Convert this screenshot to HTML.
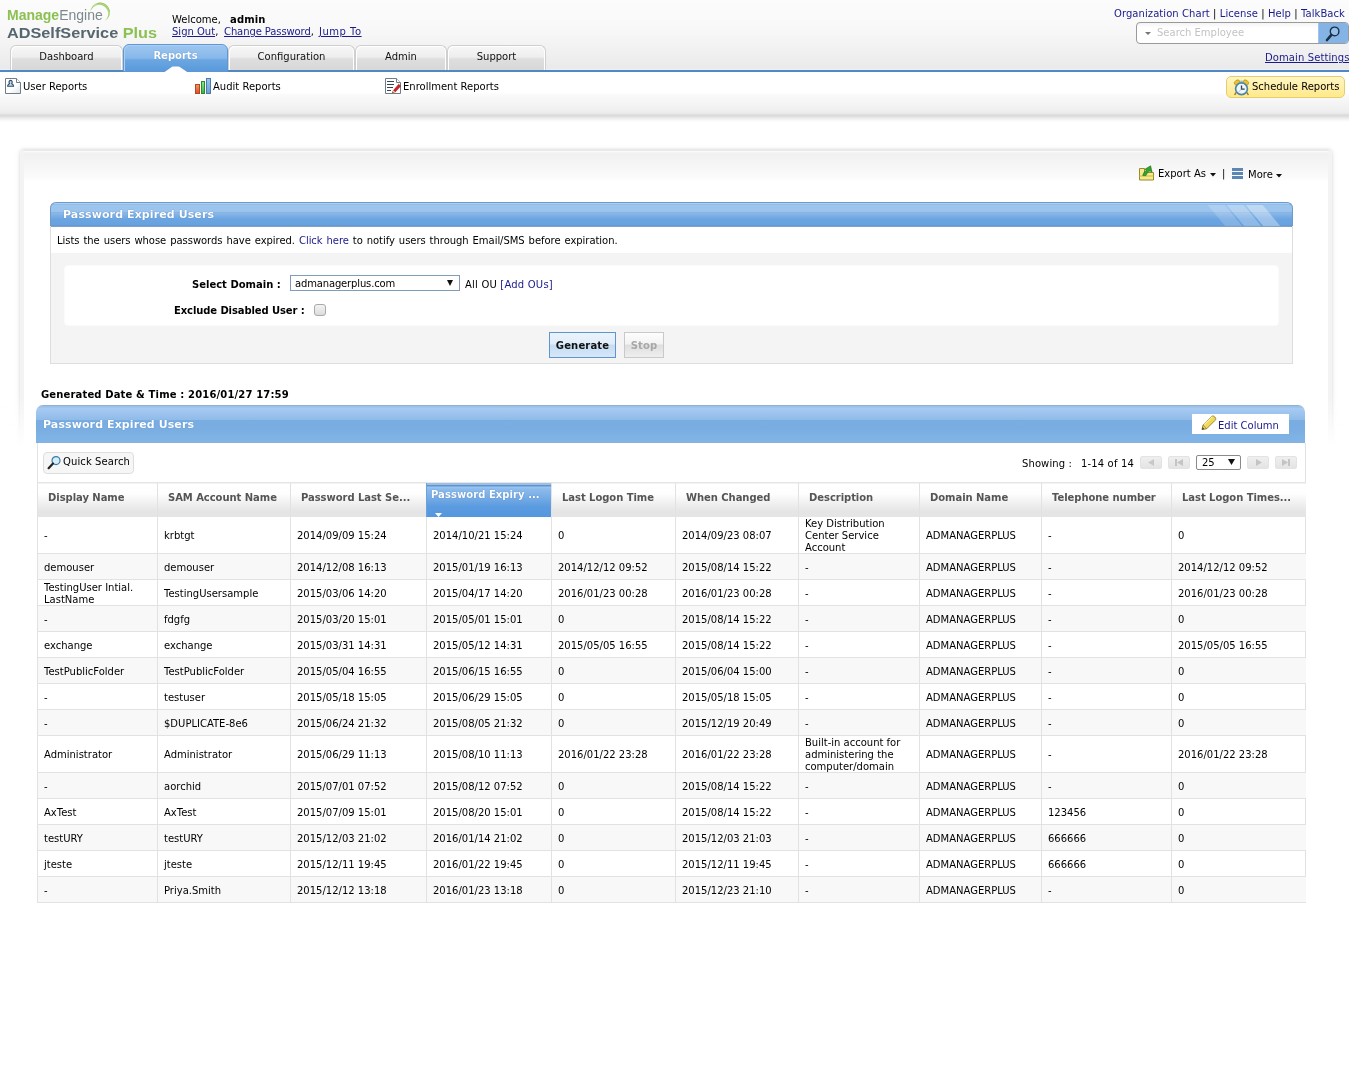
<!DOCTYPE html>
<html lang="en">
<head>
<meta charset="utf-8">
<title>ADSelfService Plus - Password Expired Users</title>
<style>
*{box-sizing:border-box}
html,body{margin:0;padding:0}
body{width:1349px;height:1076px;position:relative;overflow:hidden;background:#fff;color:#000;
 font-family:"DejaVu Sans","Liberation Sans",sans-serif;font-size:10px;line-height:12px}
a{color:#1a1a8c;text-decoration:none}
.abs{position:absolute;white-space:nowrap}
b,.b{font-weight:bold;letter-spacing:.15px}

/* ---------- header ---------- */
#hdr{position:absolute;left:0;top:0;width:1349px;height:70px;
 background:linear-gradient(#fcfcfc 0,#f8f8f8 30px,#efefef 55px,#eaeaea 69px,#e9f0f8 69px,#e9f0f8 70px)}
#blueline{position:absolute;left:0;top:70px;width:1349px;height:2px;background:#5188c3}
.logo1{left:7px;top:7px;font-family:"Liberation Sans",sans-serif;font-size:14px;line-height:16px;letter-spacing:0}
.logo1 .m{color:#8cc152;font-weight:bold}
.logo1 .e{color:#7d8a8f}
.logo2{left:7px;top:24px;font-family:"Liberation Sans",sans-serif;font-size:15px;line-height:17px;font-weight:bold;color:#56666f;letter-spacing:0;transform:scaleX(1.084);transform-origin:0 0}
.logo2 .p{color:#8cc152}
.ulink a{text-decoration:underline}

/* tabs */
.tab{position:absolute;top:45px;height:25px;border:1px solid #cfcfcf;border-bottom:0;border-radius:6px 6px 0 0;
 background:linear-gradient(#f7f7f7 0,#eeeeee 11px,#dedede 13px,#d7d7d7 25px);text-align:center;line-height:21px;color:#111;
 box-shadow:inset 1px 1px 0 #fff, inset -1px 0 0 #fff}
.tab.sel{top:44px;height:28px;z-index:2;border-color:#5f97d4;background:linear-gradient(#9dc6ef 0,#87b8ea 13px,#6ba6e1 15px,#5d9cdc 24px,#5a97d8 28px);
 color:#fff;font-weight:bold;line-height:21px;padding-right:5px;box-shadow:inset 1px 1px 0 #a9d0f4;text-shadow:0 0 1px #3c74b4}

/* search */
#sbox{position:absolute;left:1136px;top:22px;width:213px;height:22px;border:1px solid #9a9a9a;border-radius:4px;background:linear-gradient(#f4f4f4,#fff 5px);overflow:hidden}
#sbtn{position:absolute;right:0;top:0;width:30px;height:20px;background:#84b4e6;border-left:1px solid #9cc4ee}

/* ---------- sub nav ---------- */
#subnav{position:absolute;left:0;top:72px;width:1349px;height:50px;
 background:linear-gradient(#fff 0,#fff 21px,#fbfbfb 22px,#f3f3f3 33px,#eeeeee 40px,#e6e6e6 42px,#dbdbdb 43px,#dbdbdb 44px,#e3e3e3 45px,#eaeaea 46px,#f6f6f6 48px,#fff 50px)}
#sched{position:absolute;left:1226px;top:76px;width:119px;height:22px;border:1px solid #e3cf6e;border-radius:5px;
 background:linear-gradient(#fff6c4,#ffe98a);}

/* ---------- outer panel ---------- */
#panel{position:absolute;left:20px;top:150px;width:1312px;height:321px;border-radius:4px;
 border-left:4px solid #f3f3f3;border-right:4px solid #f3f3f3;border-top:1px solid #e9e9e9;box-shadow:0 0 5px rgba(0,0,0,.14),0 -1px 3px rgba(0,0,0,.05);
 background:linear-gradient(#fafafa 0,#fafafa 1px,#f5f5f5 1px,#f1f1f1 2px,#f1f1f1 4px,#f5f5f5 13px,#f8f8f8 20px,#fafafa 26px,#fff 30px)}
#panelmask{position:absolute;left:0;top:395px;width:1349px;height:90px;background:linear-gradient(rgba(255,255,255,0) 0,#fff 50px,#fff 90px)}

/* ---------- report box ---------- */
#rbox{position:absolute;left:50px;top:202px;width:1243px;height:162px;border:1px solid #dedede;border-top:0;background:#f4f4f4;border-radius:6px 6px 0 0}
#rhead{position:absolute;left:-1px;top:0;width:1243px;height:24px;border:1px solid #6f9bcb;border-bottom:0;border-radius:6px 6px 0 0;overflow:hidden;
 background:linear-gradient(#a9d1f8 0,#a9d1f8 1px,#93bde9 1px,#93bde9 2px,#9dc6ef 2px,#9bc3ec 9px,#88b4e3 9px,#88b4e3 10px,#8bb8e8 10px,#6ba5e1 16px,#67a1df 22px,#6491c4 23px)}
#rhead .t{position:absolute;left:12px;top:5px;font-size:11px;line-height:13px;font-weight:bold;color:#fff;letter-spacing:.1px;text-shadow:0 0 1px #2f6fb5}
#rdesc{position:absolute;left:0;top:24px;width:1241px;height:27px;background:#fff;border-top:1px solid #7fa3cc}
#rform{position:absolute;left:13px;top:63px;width:1215px;height:61px;background:#fff;border:1px solid #fbfbfb;border-radius:4px}
.sel{position:absolute;background:#fff;border:1px solid #7f9db9;height:16px;line-height:13px;padding-left:5px}
.btn{position:absolute;height:26px;border:1px solid #5f94cd;text-align:center;font-weight:bold;line-height:25px;letter-spacing:.15px}

/* ---------- table ---------- */
#thead{position:absolute;left:36px;top:405px;width:1269px;height:38px;border-radius:7px 7px 0 0;
 background:linear-gradient(#90b1d2 0,#90b1d2 1px,#a2c4e7 1px,#97bde5 2px,#a8cbf3 3px,#8fbbe8 15px,#79ade2 15px,#7aaee2 25px,#82b4e6 37px,#86afd8 38px)}
#thead .t{position:absolute;left:7px;top:13px;font-size:11px;line-height:13px;font-weight:bold;color:#fff;letter-spacing:.1px;text-shadow:0 0 1px #3f7fc4}
#editcol{position:absolute;left:1156px;top:9px;width:97px;height:20px;background:#fff}
#tbody{position:absolute;left:37px;top:443px;width:1269px;height:460px;border-left:1px solid #e2e2e2;border-right:1px solid #e2e2e2}
#qs{position:absolute;left:43px;top:452px;width:91px;height:22px;border:1px solid #dedede;border-radius:4px;background:#f6f6f6}
.pg{position:absolute;top:456px;width:22px;height:13px;border:1px solid #e3e3e3;border-radius:2px;background:linear-gradient(#efefef,#e4e4e4)}
table#grid{position:absolute;left:37px;top:482px;width:1268px;border-collapse:collapse;table-layout:fixed}
#grid th{height:34px;padding:0 0 3px 10px;text-align:left;vertical-align:middle;font-weight:bold;color:#555;letter-spacing:-.05px;white-space:nowrap;
 border-left:1px solid #e2e2e2;border-top:1px solid #e6e6e6;background:linear-gradient(#fff 0,#fefefe 10px,#f4f4f4 17px,#eaeaea 24px,#e5e5e5 28px,#e5e5e5 34px);overflow:hidden}
#grid th.sort{background:linear-gradient(#e6e6e6 0,#e6e6e6 1px,#5b95d6 1px,#5b95d6 3px,#a3caf1 3px,#8dbcec 5px,#74aae4 15px,#5a9be0 23px,#5597de 34px);border-left-color:#6aa2e0;color:#fff;padding:0 0 9px 4px;position:relative;letter-spacing:.06px;text-shadow:0 0 1px #2f6fb5}
#grid td{height:26px;padding:0 0 0 6px;vertical-align:middle;border-left:1px solid #e2e2e2;border-bottom:1px solid #e2e2e2;line-height:12px}
#grid td i{display:block;font-style:normal;position:relative;top:1px}
#grid tr.a td{background:#f8f8f8}
#grid tr.h3 td{height:37px}
</style>
</head>
<body>
<div id="root" style="position:absolute;left:0;top:0;width:1349px;height:1076px;will-change:transform">

<!-- ================= HEADER ================= -->
<div id="hdr"></div>
<div class="abs logo1"><span class="m">Manage</span><span class="e">Engine</span></div>
<svg class="abs" style="left:88px;top:1px" width="26" height="24" viewBox="0 0 26 24">
 <path d="M2.3 11.5 A9.8 9.8 0 1 1 16.2 20.3 A9 9 0 1 0 2.3 11.5z" fill="#a4d170"/>
 <path d="M5.5 5.2 A8.9 8.9 0 0 1 20.6 13.5" fill="none" stroke="#d3edb0" stroke-width=".6"/>
 <path d="M9 2.6 A9.4 9.4 0 0 1 21.4 11" fill="none" stroke="#7fb347" stroke-width=".5"/>
</svg>
<div class="abs logo2">ADSelfService <span class="p">Plus</span></div>

<div class="abs" style="left:172px;top:14px">Welcome,</div>
<div class="abs b" style="left:230px;top:14px">admin</div>
<div class="abs ulink" style="left:172px;top:26px"><a>Sign Out</a>,</div>
<div class="abs ulink" style="left:224px;top:26px;letter-spacing:-.1px"><a>Change Password</a>,</div>
<div class="abs ulink" style="left:319px;top:26px;letter-spacing:.5px"><a>Jump To</a></div>

<div class="abs" style="left:1114px;top:8px;letter-spacing:.07px"><a>Organization Chart</a> | <a>License</a> | <a>Help</a> | <a>TalkBack</a></div>
<div id="sbox">
  <svg class="abs" style="left:8px;top:9px" width="6" height="3" viewBox="0 0 6 3"><path d="M0 0h6L3 3z" fill="#777"/></svg>
  <div class="abs" style="left:20px;top:4px;color:#c3c3c3">Search Employee</div>
  <div id="sbtn">
   <svg class="abs" style="left:6px;top:1px" width="18" height="18" viewBox="0 0 18 18">
     <circle cx="9.6" cy="7.4" r="4.3" fill="#95c0ec" stroke="#1d2f44" stroke-width="1.4"/>
     <path d="M6.2 11.2 L2 16" stroke="#1d2f44" stroke-width="2.6" stroke-linecap="round"/>
   </svg>
  </div>
</div>
<div class="abs ulink" style="left:1265px;top:52px;letter-spacing:.1px"><a>Domain Settings</a></div>

<!-- tabs -->
<div class="tab" style="left:10px;width:113px">Dashboard</div>
<div class="tab sel" style="left:123px;width:105px">Reports</div>
<div class="tab" style="left:228px;width:127px">Configuration</div>
<div class="tab" style="left:355px;width:92px">Admin</div>
<div class="tab" style="left:447px;width:99px">Support</div>
<div id="blueline"></div>
<svg class="abs" style="left:164px;top:66px;z-index:3" width="24" height="6" viewBox="0 0 24 6"><path d="M.6 6 L8.4 .6 Q9 .4 9.6 .4 L14 .4 Q14.8 .4 15.4 .8 L23.2 6z" fill="#fff"/></svg>

<!-- ================= SUB NAV ================= -->
<div id="subnav"></div>
<div class="abs" style="left:23px;top:81px">User Reports</div>
<div class="abs" style="left:213px;top:81px">Audit Reports</div>
<div class="abs" style="left:403px;top:81px">Enrollment Reports</div>
<div id="sched">
  <svg class="abs" style="left:6px;top:2px" width="17" height="17" viewBox="0 0 17 17">
    <ellipse cx="4.2" cy="3.6" rx="3" ry="2.4" transform="rotate(-35 4.2 3.6)" fill="#edc22e" stroke="#b8901a" stroke-width=".7"/>
    <ellipse cx="12.8" cy="3.6" rx="3" ry="2.4" transform="rotate(35 12.8 3.6)" fill="#edc22e" stroke="#b8901a" stroke-width=".7"/>
    <path d="M3.2 13.4 L1.6 16 M13.8 13.4 L15.4 16" stroke="#8a7a2a" stroke-width="1.4"/>
    <rect x="7.3" y="1.6" width="2.4" height="2" fill="#8fc2dc"/>
    <circle cx="8.5" cy="9.8" r="5.9" fill="#eef7fd" stroke="#4f86a8" stroke-width="1.7"/>
    <path d="M8.5 6.4v3.8h3.2" fill="none" stroke="#3a3f48" stroke-width="1.3"/>
    <path d="M8.5 10.2 L5.6 13" stroke="#9aa4ad" stroke-width=".6"/>
  </svg>
  <div class="abs" style="left:25px;top:4px">Schedule Reports</div></div>

<!-- icons -->
<svg class="abs" style="left:5px;top:78px" width="16" height="16" viewBox="0 0 16 16">
  <defs><linearGradient id="pg1" x1="0" y1="0" x2="1" y2="1"><stop offset=".55" stop-color="#fff"/><stop offset="1" stop-color="#dfe3e6"/></linearGradient></defs>
  <path d="M.5 .5h11l4 4v11h-15z" fill="url(#pg1)" stroke="#707c89" stroke-width="1"/>
  <path d="M11.5 .5v4h4" fill="#fff" stroke="#707c89" stroke-width="1"/>
  <path d="M2.6 8.2 C2.6 6.6 4 6.2 4.6 5.6 C3.6 4.6 3.8 2.4 5.6 2.4 C7.4 2.4 7.6 4.6 6.6 5.6 C7.2 6.2 8.6 6.6 8.6 8.2z" fill="#bfdcf0" stroke="#2f4b68" stroke-width="1.1" stroke-linejoin="round"/>
</svg>
<svg class="abs" style="left:195px;top:78px" width="16" height="16" viewBox="0 0 16 16">
  <defs>
   <linearGradient id="br" x1="0" y1="0" x2="0" y2="1"><stop offset="0" stop-color="#f39a6a"/><stop offset="1" stop-color="#e4492c"/></linearGradient>
   <linearGradient id="bg" x1="0" y1="0" x2="0" y2="1"><stop offset="0" stop-color="#86ee90"/><stop offset="1" stop-color="#3fae3f"/></linearGradient>
   <linearGradient id="bb" x1="0" y1="0" x2="0" y2="1"><stop offset="0" stop-color="#9cc6f0"/><stop offset="1" stop-color="#6d9ed4"/></linearGradient>
  </defs>
  <rect x=".5" y="6.5" width="4" height="9" fill="url(#br)" stroke="#b2481f" stroke-width="1"/>
  <rect x="6.5" y="3.5" width="3" height="12" fill="url(#bg)" stroke="#2c8a2c" stroke-width="1"/>
  <rect x="11.5" y=".5" width="4" height="15" fill="url(#bb)" stroke="#4c7bb2" stroke-width="1"/>
</svg>
<svg class="abs" style="left:385px;top:78px" width="17" height="16" viewBox="0 0 17 16">
  <path d="M.5 .5h11l4 4v11h-15z" fill="#fff" stroke="#707c89" stroke-width="1"/>
  <path d="M11.5 .5v4h4" fill="#fff" stroke="#707c89" stroke-width="1"/>
  <path d="M2 3.5h7M2 6.5h7M2 9.5h6M2 12.5h4" stroke="#36464f" stroke-width="1.1"/>
  <path d="M7.2 14.8 L8.2 12.2 L13.4 6.2 L15.8 8.2 L10.4 14.2z" fill="#c4262c"/>
  <path d="M13.4 6.2 L15.8 8.2" stroke="#8e1418" stroke-width=".8"/>
  <path d="M7.2 14.8 L8.2 12.2 L10.4 14.2z" fill="#f3d9a0"/>
  <path d="M7.2 14.8 L7.7 13.5 L8.8 14.4z" fill="#111"/>
</svg>

<!-- ================= PANEL ================= -->
<div id="panel"></div><div id="panelmask"></div>

<svg class="abs" style="left:1138px;top:165px" width="17" height="16" viewBox="0 0 17 16">
 <path d="M1.5 3.5h5v4h9v7.5h-14z" fill="#f7ea8c" stroke="#9a8a2a" stroke-width="1"/>
 <path d="M1.5 11h14" stroke="#cdb948" stroke-width="1"/>
 <path d="M4.8 10.6 C5.2 7.8 6.8 6.2 8.4 5.6 L7 4.2 L12.6 .8 L14 7 L11.8 5.9 C10 6.9 8.6 8.6 8 10.6z" fill="#2fa52f" stroke="#176b17" stroke-width=".6"/>
</svg>
<div class="abs" style="left:1158px;top:168px">Export As</div>
<svg class="abs" style="left:1210px;top:173px" width="6" height="4" viewBox="0 0 6 4"><path d="M0 0h6L3 3.6z" fill="#111"/></svg>
<div class="abs" style="left:1222px;top:168px">|</div>
<svg class="abs" style="left:1232px;top:168px" width="11" height="11" viewBox="0 0 11 11"><path d="M0 0h11v3h-11zM0 4h11v3h-11zM0 8h11v3h-11z" fill="#5d87b3"/></svg>
<div class="abs" style="left:1248px;top:169px">More</div>
<svg class="abs" style="left:1276px;top:174px" width="6" height="4" viewBox="0 0 6 4"><path d="M0 0h6L3 3.6z" fill="#111"/></svg>

<div id="rbox">
  <div id="rhead">
    <svg class="abs" style="right:0;top:0" width="100" height="24" viewBox="0 0 100 24">
      <path d="M15.7 2h17l18.3 22h-17z" fill="#fff" opacity=".18"/>
      <path d="M34.7 2h17l18.3 22h-17z" fill="#fff" opacity=".26"/>
      <path d="M53.7 2h17l18.3 22h-17z" fill="#fff" opacity=".34"/>
    </svg>
    <div class="t">Password Expired Users</div>
  </div>
  <div id="rdesc"><div class="abs" style="left:6px;top:8px;letter-spacing:-.04px;word-spacing:.8px">Lists the users whose passwords have expired. <a>Click here</a> to notify users through Email/SMS before expiration.</div></div>
  <div id="rform">
    <div class="abs b" style="left:127px;top:13px;letter-spacing:0">Select Domain :</div>
    <div class="sel" style="left:225px;top:9px;width:170px;padding-left:4px;letter-spacing:-.15px;line-height:15px">admanagerplus.com
      <svg class="abs" style="right:6px;top:4px" width="6" height="6" viewBox="0 0 6 6"><path d="M0 0h6L3 6z" fill="#111"/></svg>
    </div>
    <div class="abs" style="left:400px;top:13px;letter-spacing:.2px">All OU <a>[Add OUs]</a></div>
    <div class="abs b" style="left:109px;top:39px;letter-spacing:-.1px">Exclude Disabled User :</div>
    <div class="abs" style="left:249px;top:38px;width:12px;height:12px;border:1px solid #a9a9a9;border-radius:3px;background:linear-gradient(#f3f3f3,#dcdcdc)"></div>
  </div>
  <div class="btn" style="left:498px;top:130px;width:67px;background:linear-gradient(#eaf3fc 0,#e1edfa 11px,#c6dcf3 12px,#d6e7f8 24px);color:#111">Generate</div>
  <div class="btn" style="left:573px;top:130px;width:40px;border-color:#c9c9c9;background:linear-gradient(#fdfdfd 0,#f3f3f3 11px,#dfdfdf 12px,#eeeeee 24px);color:#a8a8a8">Stop</div>
</div>

<div class="abs b" style="left:41px;top:389px;color:#000">Generated Date &amp; Time : 2016/01/27 17:59</div>

<!-- ================= TABLE ================= -->
<div id="thead"><div class="t">Password Expired Users</div>
  <div id="editcol">
    <svg class="abs" style="left:8px;top:1px" width="17" height="16" viewBox="0 0 17 16">
      <path d="M2 14.6 L3 10.2 L11.4 1.6 C12.4 .6 13.6 .8 14.8 2 C16 3.2 16 4.4 15.2 5.2 L6.6 13.8z" fill="#f0d95a" stroke="#8f7a2a" stroke-width=".9"/>
      <path d="M4.2 9.6 L12.4 1.6" stroke="#faf0a8" stroke-width="1.2"/>
      <path d="M3 10.2 L6.6 13.8" stroke="#8f7a2a" stroke-width=".8"/>
      <path d="M2 14.6 L2.6 12.2 L4.4 14z" fill="#333"/>
    </svg>
    <div class="abs" style="left:26px;top:6px;color:#1a1a8c">Edit Column</div>
  </div>
</div>
<div id="tbody"></div>
<div id="qs">
  <svg class="abs" style="left:3px;top:2px" width="15" height="15" viewBox="0 0 15 15">
    <circle cx="9" cy="5.6" r="4" fill="#d6ecf8" stroke="#3a7ca8" stroke-width="1.2"/>
    <path d="M6 8.6 L1.6 13.2" stroke="#222" stroke-width="2.2" stroke-linecap="round"/>
  </svg>
  <div class="abs" style="left:19px;top:3px;letter-spacing:.1px">Quick Search</div>
</div>
<div class="abs" style="left:1022px;top:458px;letter-spacing:.1px">Showing :</div>
<div class="abs" style="left:1081px;top:458px;letter-spacing:.15px">1-14 of 14</div>
<div class="pg" style="left:1140px"><svg class="abs" style="left:7px;top:2px" width="6" height="7" viewBox="0 0 6 7"><path d="M6 0v7L0 3.5z" fill="#c8c8c8"/></svg></div>
<div class="pg" style="left:1168px"><svg class="abs" style="left:6px;top:2px" width="8" height="7" viewBox="0 0 8 7"><path d="M0 0h2v7h-2zM8 0v7L2 3.5z" fill="#c4c4c4"/></svg></div>
<div class="sel" style="left:1196px;top:455px;width:45px;height:15px;border-color:#8a8a8a;border-radius:2px;line-height:13px">25
  <svg class="abs" style="right:5px;top:3px" width="7" height="6" viewBox="0 0 7 6"><path d="M0 0h7L3.5 6z" fill="#111"/></svg></div>
<div class="pg" style="left:1247px"><svg class="abs" style="left:8px;top:2px" width="6" height="7" viewBox="0 0 6 7"><path d="M0 0v7L6 3.5z" fill="#c4c4c4"/></svg></div>
<div class="pg" style="left:1275px"><svg class="abs" style="left:6px;top:2px" width="8" height="7" viewBox="0 0 8 7"><path d="M6 0h2v7h-2zM0 0v7L6 3.5z" fill="#c4c4c4"/></svg></div>

<table id="grid"><colgroup><col style="width:120px"><col style="width:133px"><col style="width:136px"><col style="width:125px"><col style="width:124px"><col style="width:123px"><col style="width:121px"><col style="width:122px"><col style="width:130px"><col style="width:134px"></colgroup>
<tr><th>Display Name</th><th>SAM Account Name</th><th>Password Last Se...</th><th class="sort">Password Expiry ...<svg class="abs" style="left:8px;bottom:0" width="7" height="4" viewBox="0 0 7 4"><path d="M0 0h7L3.5 4z" fill="#fff"/></svg></th><th>Last Logon Time</th><th>When Changed</th><th>Description</th><th>Domain Name</th><th>Telephone number</th><th>Last Logon Times...</th></tr>
<tr class="h3"><td><i>-</i></td><td><i>krbtgt</i></td><td><i>2014/09/09 15:24</i></td><td><i>2014/10/21 15:24</i></td><td><i>0</i></td><td><i>2014/09/23 08:07</i></td><td><i>Key Distribution<br>Center Service<br>Account</i></td><td><i>ADMANAGERPLUS</i></td><td><i>-</i></td><td><i>0</i></td></tr>
<tr class="a"><td><i>demouser</i></td><td><i>demouser</i></td><td><i>2014/12/08 16:13</i></td><td><i>2015/01/19 16:13</i></td><td><i>2014/12/12 09:52</i></td><td><i>2015/08/14 15:22</i></td><td><i>-</i></td><td><i>ADMANAGERPLUS</i></td><td><i>-</i></td><td><i>2014/12/12 09:52</i></td></tr>
<tr class=""><td><i>TestingUser Intial.<br>LastName</i></td><td><i>TestingUsersample</i></td><td><i>2015/03/06 14:20</i></td><td><i>2015/04/17 14:20</i></td><td><i>2016/01/23 00:28</i></td><td><i>2016/01/23 00:28</i></td><td><i>-</i></td><td><i>ADMANAGERPLUS</i></td><td><i>-</i></td><td><i>2016/01/23 00:28</i></td></tr>
<tr class="a"><td><i>-</i></td><td><i>fdgfg</i></td><td><i>2015/03/20 15:01</i></td><td><i>2015/05/01 15:01</i></td><td><i>0</i></td><td><i>2015/08/14 15:22</i></td><td><i>-</i></td><td><i>ADMANAGERPLUS</i></td><td><i>-</i></td><td><i>0</i></td></tr>
<tr class=""><td><i>exchange</i></td><td><i>exchange</i></td><td><i>2015/03/31 14:31</i></td><td><i>2015/05/12 14:31</i></td><td><i>2015/05/05 16:55</i></td><td><i>2015/08/14 15:22</i></td><td><i>-</i></td><td><i>ADMANAGERPLUS</i></td><td><i>-</i></td><td><i>2015/05/05 16:55</i></td></tr>
<tr class="a"><td><i>TestPublicFolder</i></td><td><i>TestPublicFolder</i></td><td><i>2015/05/04 16:55</i></td><td><i>2015/06/15 16:55</i></td><td><i>0</i></td><td><i>2015/06/04 15:00</i></td><td><i>-</i></td><td><i>ADMANAGERPLUS</i></td><td><i>-</i></td><td><i>0</i></td></tr>
<tr class=""><td><i>-</i></td><td><i>testuser</i></td><td><i>2015/05/18 15:05</i></td><td><i>2015/06/29 15:05</i></td><td><i>0</i></td><td><i>2015/05/18 15:05</i></td><td><i>-</i></td><td><i>ADMANAGERPLUS</i></td><td><i>-</i></td><td><i>0</i></td></tr>
<tr class="a"><td><i>-</i></td><td><i>$DUPLICATE-8e6</i></td><td><i>2015/06/24 21:32</i></td><td><i>2015/08/05 21:32</i></td><td><i>0</i></td><td><i>2015/12/19 20:49</i></td><td><i>-</i></td><td><i>ADMANAGERPLUS</i></td><td><i>-</i></td><td><i>0</i></td></tr>
<tr class="h3"><td><i>Administrator</i></td><td><i>Administrator</i></td><td><i>2015/06/29 11:13</i></td><td><i>2015/08/10 11:13</i></td><td><i>2016/01/22 23:28</i></td><td><i>2016/01/22 23:28</i></td><td><i>Built-in account for<br>administering the<br>computer/domain</i></td><td><i>ADMANAGERPLUS</i></td><td><i>-</i></td><td><i>2016/01/22 23:28</i></td></tr>
<tr class="a"><td><i>-</i></td><td><i>aorchid</i></td><td><i>2015/07/01 07:52</i></td><td><i>2015/08/12 07:52</i></td><td><i>0</i></td><td><i>2015/08/14 15:22</i></td><td><i>-</i></td><td><i>ADMANAGERPLUS</i></td><td><i>-</i></td><td><i>0</i></td></tr>
<tr class=""><td><i>AxTest</i></td><td><i>AxTest</i></td><td><i>2015/07/09 15:01</i></td><td><i>2015/08/20 15:01</i></td><td><i>0</i></td><td><i>2015/08/14 15:22</i></td><td><i>-</i></td><td><i>ADMANAGERPLUS</i></td><td><i>123456</i></td><td><i>0</i></td></tr>
<tr class="a"><td><i>testURY</i></td><td><i>testURY</i></td><td><i>2015/12/03 21:02</i></td><td><i>2016/01/14 21:02</i></td><td><i>0</i></td><td><i>2015/12/03 21:03</i></td><td><i>-</i></td><td><i>ADMANAGERPLUS</i></td><td><i>666666</i></td><td><i>0</i></td></tr>
<tr class=""><td><i>jteste</i></td><td><i>jteste</i></td><td><i>2015/12/11 19:45</i></td><td><i>2016/01/22 19:45</i></td><td><i>0</i></td><td><i>2015/12/11 19:45</i></td><td><i>-</i></td><td><i>ADMANAGERPLUS</i></td><td><i>666666</i></td><td><i>0</i></td></tr>
<tr class="a"><td><i>-</i></td><td><i>Priya.Smith</i></td><td><i>2015/12/12 13:18</i></td><td><i>2016/01/23 13:18</i></td><td><i>0</i></td><td><i>2015/12/23 21:10</i></td><td><i>-</i></td><td><i>ADMANAGERPLUS</i></td><td><i>-</i></td><td><i>0</i></td></tr>
</table>

</div>
</body>
</html>
